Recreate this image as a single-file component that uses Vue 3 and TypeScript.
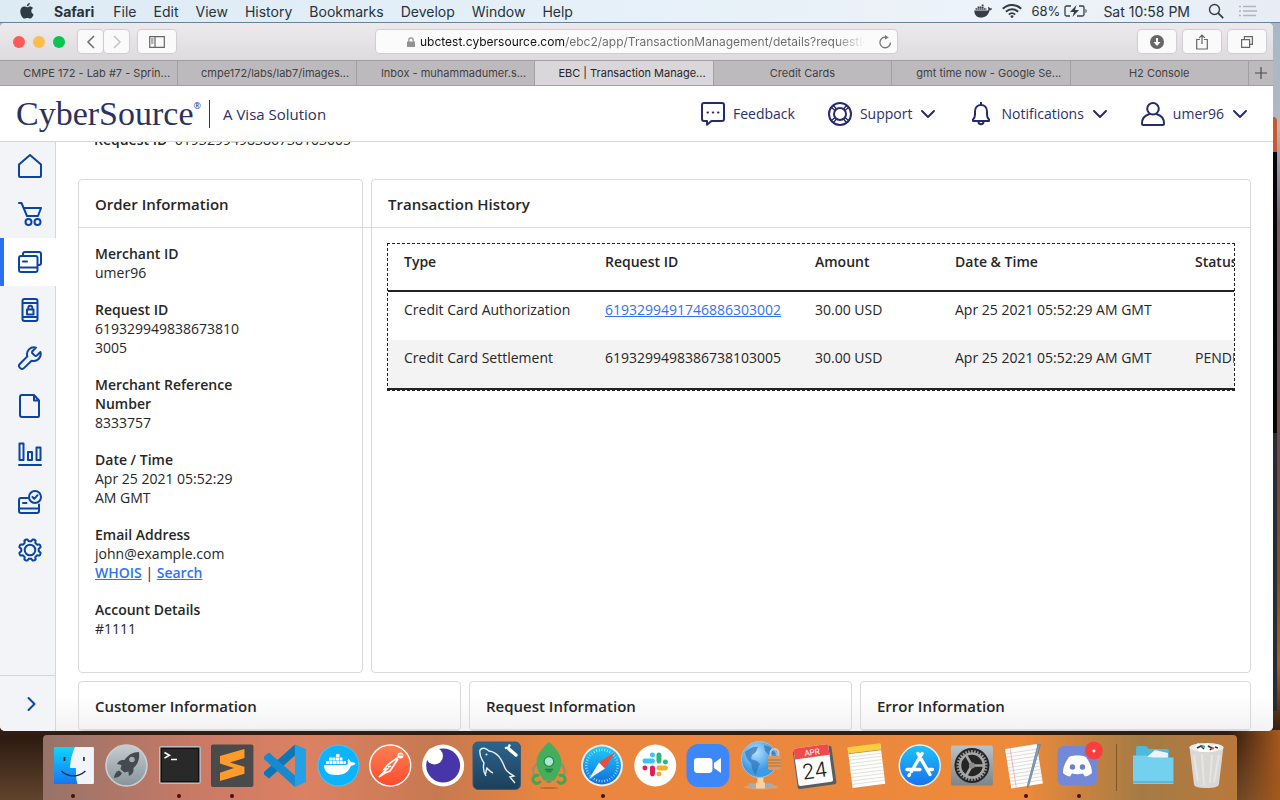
<script setup lang="ts">
interface Field {
  label: string
  lines: string[]
  links?: string[]
}
interface Transaction {
  type: string
  id: string
  linked: boolean
  amount: string
  date: string
  status: string
}
interface NavItem {
  name: string
  d: string
  active?: boolean
}

const menus: string[] = ['File', 'Edit', 'View', 'History', 'Bookmarks', 'Develop', 'Window', 'Help']

const tabs = [
  { title: 'CMPE 172 - Lab #7 - Sprin...', long: true },
  { title: 'cmpe172/labs/lab7/images...', long: true },
  { title: 'Inbox - muhammadumer.s...', long: true },
  { title: 'EBC | Transaction Manage...', long: true, active: true },
  { title: 'Credit Cards' },
  { title: 'gmt time now - Google Se...', long: true },
  { title: 'H2 Console' },
]

function gearPath(): string {
  const pts: string[] = []
  for (let i = 0; i < 128; i++) {
    const a = (i / 128) * Math.PI * 2
    const r = 9.9 - 1.2 * Math.tanh(3 * Math.cos(8 * a))
    pts.push(`${(12 + r * Math.sin(a)).toFixed(2)} ${(12 - r * Math.cos(a)).toFixed(2)}`)
  }
  return `M${pts.join('L')}Z`
}

const nav: NavItem[] = [
  { name: 'Home', d: 'M1 10.500 12 1l11 9.500V22a1 1 0 0 1-1 1H2a1 1 0 0 1-1-1z' },
  { name: 'Virtual terminal', d: 'M1 1h2.500L9 14h11l3-8H5.500M13.500 20a3 3 0 1 1-6 0a3 3 0 1 1 6 0zM22.500 20a3 3 0 1 1-6 0a3 3 0 1 1 6 0z' },
  { name: 'Transaction management', active: true, d: 'M3 6h14.500a2 2 0 0 1 2 2v12a2 2 0 0 1-2 2H3a2 2 0 0 1-2-2V8a2 2 0 0 1 2-2zM1 17.500h18.500M5 11.500h4M5 5.500V4a2 2 0 0 1 2-2h14a2 2 0 0 1 2 2v9a2 2 0 0 1-2 2h-1' },
  { name: 'Token management', d: 'M6.500 1h11a2 2 0 0 1 2 2v18a2 2 0 0 1-2 2h-11a2 2 0 0 1-2-2V3a2 2 0 0 1 2-2zM4.500 5h15M4.500 19h15M9 11.500h6.500v5H9zM10.300 11V9.800a2 2 0 0 1 4 0V11' },
  { name: 'Tools', d: 'M18 1.600A7 7 0 0 0 9.300 10.400L2 17.700a2.900 2.900 0 0 0 4.200 4.200l7.400-7.200A7 7 0 0 0 22.400 6l-3.600 3.600a1.400 1.400 0 0 1-2 0l-2.400-2.400a1.400 1.400 0 0 1 0-2z' },
  { name: 'Documents', d: 'M4 1h12l5 5.500V22a1 1 0 0 1-1 1H4a2 2 0 0 1-2-2V3a2 2 0 0 1 2-2zM16 1v5.500h5' },
  { name: 'Reports', d: 'M1 23h22M1.500 1.500h4V18h-4zM10 10h4v8h-4zM18.500 5.500h4V18h-4z' },
  { name: 'Payment configuration', d: 'M9.500 8H3a2 2 0 0 0-2 2v11a2 2 0 0 0 2 2h16a2 2 0 0 0 2-2v-6.500M1 18.500h20M5 13h3.500M23 7a6 6 0 1 1-12 0a6 6 0 1 1 12 0zM14.500 7l1.800 1.800 3.200-3.600' },
  { name: 'Settings', d: gearPath() + 'M17.300 12a5.300 5.300 0 1 1-10.600 0a5.300 5.300 0 1 1 10.600 0z' },
]

const fields: Field[] = [
  { label: 'Merchant ID', lines: ['umer96'] },
  { label: 'Request ID', lines: ['6193299498386738103005'] },
  { label: 'Merchant Reference Number', lines: ['8333757'] },
  { label: 'Date / Time', lines: ['Apr 25 2021 05:52:29 AM GMT'] },
  { label: 'Email Address', lines: ['john@example.com'], links: ['WHOIS', 'Search'] },
  { label: 'Account Details', lines: ['#1111'] },
]

const transactions: Transaction[] = [
  { type: 'Credit Card Authorization', id: '6193299491746886303002', linked: true, amount: '30.00 USD', date: 'Apr 25 2021 05:52:29 AM GMT', status: '' },
  { type: 'Credit Card Settlement', id: '6193299498386738103005', linked: false, amount: '30.00 USD', date: 'Apr 25 2021 05:52:29 AM GMT', status: 'PENDING' },
]

const lowerCards: string[] = ['Customer Information', 'Request Information', 'Error Information']

const ticks: number[] = Array.from({ length: 36 }, (_, i) => i * 10)
const teeth: number[] = Array.from({ length: 30 }, (_, i) => i * 12)
</script>

<template>
  <div class="desktop">
    <header class="menubar">
      <svg class="apple" viewBox="0 0 14 16" width="14" height="16"><path d="M9.800 0c.1 1.500-1.300 3.200-2.900 3.200C6.700 1.700 8.200.2 9.800 0zM7.200 4.300c.7 0 1.500-.8 2.900-.8 1.200 0 2.300.6 3 1.600-2.700 1.600-2.200 5.200.5 6.300-.6 1.700-2 4.200-3.500 4.200-1 0-1.500-.6-2.800-.6s-1.800.6-2.700.6C2.600 15.600.3 11.600.3 8.400c0-3 1.900-4.800 3.900-4.800 1.300 0 2.300.7 3 .7z" fill="#2f3b45" /></svg>
      <nav class="menus">
        <strong>Safari</strong>
        <span v-for="m in menus" :key="m">{{ m }}</span>
      </nav>
      <div class="status">
        <svg viewBox="0 0 18 14" width="18" height="14"><path d="M.3 6.500h13c1 0 1.300-.7 1-1.800l-.3-1 .8-1 1.400 1.700c.7-.1 1.500 0 1.900.4-.4 1.100-1.300 1.400-2.500 1.500C14.500 11 11.500 13.600 7 13.600 2.500 13.600.4 10.700.3 6.500z" fill="#353d45" /><path d="M1.500 5h10.800M3.600 3.200h6.500M7.800 1.200h2" stroke="#353d45" stroke-width="1.600" stroke-dasharray="1.700 .4" fill="none" /></svg>
        <svg viewBox="0 0 20 14" width="20" height="14"><g fill="none" stroke="#353d45" stroke-width="2"><path d="M.8 4.800a13 13 0 0 1 18.400 0" /><path d="M3.900 7.800a8.700 8.700 0 0 1 12.200 0" /><path d="M6.900 10.600a4.400 4.400 0 0 1 6.200 0" /></g><circle cx="10" cy="12.600" r="1.400" fill="#353d45" /></svg>
        <span class="battery-text">68%</span>
        <svg class="battery" viewBox="0 0 24 12" width="24" height="12"><path d="M7 1H2.500A1.500 1.500 0 0 0 1 2.500v7A1.500 1.500 0 0 0 2.500 11H6M15 1h3.500A1.500 1.500 0 0 1 20 2.500v7a1.500 1.500 0 0 1-1.500 1.500H13" fill="none" stroke="#353d45" stroke-width="1.300" /><path d="M12.500 0 6 7h4l-1.500 5L15 5h-4zM21.500 4c1.600.6 1.600 3.400 0 4z" fill="#353d45" /></svg>
        <span class="clock">Sat 10:58 PM</span>
        <svg class="search" viewBox="0 0 16 16" width="16" height="16"><circle cx="6.500" cy="6.500" r="5" fill="none" stroke="#353d45" stroke-width="1.400" /><path d="m10.200 10.200 5 5" stroke="#353d45" stroke-width="1.800" /></svg>
        <svg viewBox="0 0 18 12" width="18" height="12"><path d="M0 1.500h2M4 1.500h13M0 6h2M4 6h14M0 10.500h2M4 10.500h13" stroke="#aeb6bd" stroke-width="1.600" /></svg>
      </div>
    </header>

    <div class="stage">
      <main class="window">
        <div class="toolbar">
          <div class="lights"><i class="red"></i><i class="amber"></i><i class="green"></i></div>
          <div class="pair">
            <button class="tool narrow" aria-label="Back"><svg viewBox="0 0 10 14" width="10" height="14"><path d="M8 1 2 7l6 6" fill="none" stroke="#6b6b6b" stroke-width="1.500" /></svg></button>
            <button class="tool narrow" aria-label="Forward"><svg viewBox="0 0 10 14" width="10" height="14"><path d="m2 1 6 6-6 6" fill="none" stroke="#c3c3c3" stroke-width="1.500" /></svg></button>
          </div>
          <button class="tool sidebar-btn" aria-label="Sidebar"><svg viewBox="0 0 16 12" width="16" height="12"><path d="M.7.700h14.600v10.600H.7zM6 .7v10.600M2 3h2.500M2 5h2.500M2 7h2.500" fill="none" stroke="#666" stroke-width="1.200" /></svg></button>
          <div class="address">
            <svg viewBox="0 0 8 10" width="8" height="10"><path d="M0 4.500h8V10H0z" fill="#929292" /><path d="M1.800 5V3a2.200 2.200 0 0 1 4.400 0v2" fill="none" stroke="#929292" stroke-width="1.200" /></svg>
            <input aria-label="Address" type="text" value="ubctest.cybersource.com/ebc2/app/TransactionManagement/details?requestId" />
            <button class="reload" aria-label="Reload"><svg viewBox="0 0 14 14" width="14" height="14"><path d="M12.500 7.500a5.300 5.300 0 1 1-4.500-5.300" fill="none" stroke="#777" stroke-width="1.300" /><path d="M7 0v4.600l3.800-2.200z" fill="#777" /></svg></button>
          </div>
          <div class="right-tools">
            <button class="tool" aria-label="Downloads"><svg viewBox="0 0 14 14" width="14" height="14"><circle cx="7" cy="7" r="7" fill="#666" /><path d="M6 3h2v4h2.500L7 11 3.500 7H6z" fill="#fff" /></svg></button>
            <button class="tool" aria-label="Share"><svg viewBox="0 0 12 16" width="12" height="16"><path d="M4 5.500H.700V15h10.600V5.500H8M6 10V1M3.200 3.800 6 1l2.800 2.800" fill="none" stroke="#666" stroke-width="1.200" /></svg></button>
            <button class="tool" aria-label="Show all tabs"><svg viewBox="0 0 12 12" width="12" height="12"><path d="M.6 3.600h8v7.800h-8zM3.400 3.500V.6h8v7.800H8.700" fill="none" stroke="#666" stroke-width="1.200" /></svg></button>
          </div>
        </div>

        <div class="tabs">
          <button v-for="t in tabs" :key="t.title" class="tab" :class="{ active: t.active, long: t.long }">{{ t.title }}</button>
          <button class="new-tab" aria-label="New tab"><svg viewBox="0 0 12 12" width="12" height="12"><path d="M6 0v12M0 6h12" stroke="#4c4a4c" stroke-width="1.200" /></svg></button>
        </div>

        <header class="app-header">
          <a class="brand" href="#">
            <span class="wordmark">CyberSource</span><span class="reg">®</span>
            <span class="tagline">A Visa Solution</span>
          </a>
          <div class="actions">
            <button class="action">
              <svg viewBox="0 0 24 24" width="24" height="24"><path d="M3 1h18a2 2 0 0 1 2 2v14a2 2 0 0 1-2 2H10.500L6 22.800V19H3a2 2 0 0 1-2-2V3a2 2 0 0 1 2-2z" /><path d="M6.500 10.500h.5M11.800 10.500h.5M17 10.500h.5" /></svg>
              Feedback
            </button>
            <button class="action">
              <svg viewBox="0 0 24 24" width="24" height="24"><circle cx="12" cy="12" r="11" /><circle cx="12" cy="12" r="6" /><path d="m5.500 3.500 3 3.500M3.500 5.500l3.500 3M18.500 3.500l-3 3.500M20.500 5.500l-3.500 3M5.500 20.500l3-3.500M3.500 18.500l3.500-3M18.500 20.500l-3-3.500M20.500 18.500l-3.500-3" stroke-width="1.400" /></svg>
              Support
              <svg class="chev" viewBox="0 0 16 10" width="16" height="10"><path d="m2 2 6 6 6-6" /></svg>
            </button>
            <button class="action">
              <svg viewBox="0 0 24 24" width="24" height="24"><path d="M12 0v3M4 19v-1.500c1.600-1.400 2-3 2-5V9.500C6 5.500 8.500 3 12 3s6 2.500 6 6.500v3c0 2 .4 3.600 2 5V19zM9.500 19.500a2.500 2.800 0 0 0 5 0" /></svg>
              <span class="wide">Notifications</span>
              <svg class="chev" viewBox="0 0 16 10" width="16" height="10"><path d="m2 2 6 6 6-6" /></svg>
            </button>
            <button class="action">
              <svg viewBox="0 0 24 24" width="24" height="24"><circle cx="12" cy="6.800" r="5.800" /><path d="M8 12.300C3.800 13.500 1 17 1 21.500 1 22.600 1.500 23 2.500 23h19c1 0 1.500-.4 1.500-1.500 0-4.500-2.800-8-7-9.200" /></svg>
              umer96
              <svg class="chev" viewBox="0 0 16 10" width="16" height="10"><path d="m2 2 6 6 6-6" /></svg>
            </button>
          </div>
        </header>

        <div class="app-body">
          <nav class="rail">
            <a v-for="n in nav" :key="n.name" href="#" class="rail-item" :class="{ active: n.active }" :aria-label="n.name">
              <svg viewBox="0 0 24 24" width="24" height="24"><path :d="n.d" /></svg>
            </a>
            <button class="expand" aria-label="Expand"><svg viewBox="0 0 10 16" width="10" height="16"><path d="m1.500 2 6 6-6 6" /></svg></button>
          </nav>

          <section class="content">
            <p class="summary"><b>Request ID</b> 6193299498386738103005</p>

            <div class="row top">
              <article class="card">
                <h2 class="bridge">Order Information</h2>
                <dl class="fields">
                  <div v-for="f in fields" :key="f.label">
                    <dt>{{ f.label }}</dt>
                    <dd v-for="l in f.lines" :key="l">{{ l }}</dd>
                    <dd v-if="f.links"><a href="#">{{ f.links[0] }}</a> | <a href="#">{{ f.links[1] }}</a></dd>
                  </div>
                </dl>
              </article>
              <article class="card">
                <h2>Transaction History</h2>
                <div class="table-box">
                  <table>
                    <colgroup><col class="c-type" /><col class="c-id" /><col class="c-amount" /><col class="c-date" /><col class="c-status" /></colgroup>
                    <thead>
                      <tr><th>Type</th><th>Request ID</th><th>Amount</th><th>Date &amp; Time</th><th>Status</th></tr>
                    </thead>
                    <tbody>
                      <tr v-for="t in transactions" :key="t.id">
                        <td>{{ t.type }}</td>
                        <td><a v-if="t.linked" href="#">{{ t.id }}</a><template v-else>{{ t.id }}</template></td>
                        <td>{{ t.amount }}</td>
                        <td>{{ t.date }}</td>
                        <td>{{ t.status }}</td>
                      </tr>
                    </tbody>
                  </table>
                </div>
              </article>
            </div>

            <div class="row lower">
              <article v-for="c in lowerCards" :key="c" class="card"><h2>{{ c }}</h2></article>
            </div>
          </section>
        </div>
      </main>
      <div class="behind"><i class="b-orange"></i><i class="b-black"></i><i class="b-slate"></i></div>
    </div>

    <footer class="dock">
      <button class="app running" aria-label="Finder"><svg viewBox="0 0 53 65">
        <defs><linearGradient id="fi" x1="0" y1="0" x2="0" y2="1"><stop offset="0" stop-color="#0fd5fb" /><stop offset="1" stop-color="#1476f5" /></linearGradient></defs>
        <rect x="7" y="12" width="40" height="37" rx="1" fill="#f1f4f9" /><path d="M7 12h21c-3 7-4.500 13-5 21h6c0 6 0 11 1.500 16H7z" fill="url(#fi)" />
        <path d="M17.500 22v4M37 22v4" stroke="#12283c" stroke-width="1.600" /><path d="M14.500 36c7 6.500 17 6.500 24 0" fill="none" stroke="#12283c" stroke-width="1.300" /></svg></button>
      <button class="app" aria-label="Launchpad"><svg viewBox="0 0 53 65">
        <defs><linearGradient id="lp" x1="0" y1="0" x2="0" y2="1"><stop offset="0" stop-color="#c5cdd0" /><stop offset="1" stop-color="#86949a" /></linearGradient></defs>
        <circle cx="26.500" cy="30.500" r="20.500" fill="url(#lp)" stroke="#c9ced1" stroke-width="1.600" />
        <path d="M39 17c-6 0-11 3-14.500 8-3.500-.500-6 .5-7.500 4l4.500 1-1 4 4 3.500 4-1 .5 4.500c4-1.500 5-4.500 4.500-8C38 29 40 24 39 17z" fill="#444b50" /><circle cx="32" cy="24.500" r="2.800" fill="#9facb1" /><path d="M19 35.500c-3 1-4.500 4-5 7.500 4-.5 7-2 8-5z" fill="#444b50" /></svg></button>
      <button class="app running" aria-label="Terminal"><svg viewBox="0 0 53 65">
        <rect x="6" y="11" width="42" height="38" rx="2" fill="#bcbcbc" /><rect x="7.500" y="12.500" width="39" height="35" fill="#111" /><rect x="9" y="14" width="36" height="32" fill="#292929" />
        <path d="m11.500 17.500 5 2.800-5 2.800M18 24.500h6" fill="none" stroke="#fff" stroke-width="1.600" /></svg></button>
      <button class="app running" aria-label="Sublime Text"><svg viewBox="0 0 53 65">
        <rect x="5" y="9.500" width="42.500" height="42.500" rx="2" fill="#4a4a4a" />
        <path d="M14 21l24.500-7v9L24 27.500l14.500 4.200v7L14 46v-8.300L28 33l-14-4.500z" fill="#ff9a2b" /></svg></button>
      <button class="app" aria-label="Visual Studio Code"><svg viewBox="0 0 53 65">
        <path d="M36 9.500v11L10 43.500 5 39.500v-2.500z" fill="#0b76b8" /><path d="m5 21.500 5-4L36 40.500v11.500L5 24z" fill="#1789cf" /><path d="M36 9.500V52l11-5V14z" fill="#20a1e8" /></svg></button>
      <button class="app" aria-label="Docker"><svg viewBox="0 0 53 65">
        <circle cx="26.500" cy="30.500" r="20.500" fill="#0db3fb" stroke="#45c8ff" />
        <path d="M12 30h22c2-.500 2.500-2 1.500-4.500l1-1.500c1.500 1 2.300 2.200 2.500 3.500 1.800-.4 3.300 0 4.500.8-.8 1.800-2.300 2.400-4.500 2.400C37 37.500 31 40 24 40c-7.500 0-12-3-12-10z" fill="#fff" />
        <path d="M14 27.500h20M17 24h14M24 20.500h4" stroke="#fff" stroke-width="3" stroke-dasharray="3 .5" fill="none" /></svg></button>
      <button class="app" aria-label="Postman"><svg viewBox="0 0 53 65">
        <defs><linearGradient id="pm" x1="0" y1="0" x2="0" y2="1"><stop offset="0" stop-color="#fb7f54" /><stop offset="1" stop-color="#ff4c2b" /></linearGradient></defs>
        <circle cx="26.300" cy="30.500" r="20.500" fill="url(#pm)" stroke="#fff" stroke-width="1.400" />
        <circle cx="36.500" cy="20.500" r="3" fill="#fff" /><path d="m34 22.500-10 7-4 5 3-.5-8 8M34 24l-8 12-5 2-6 4M24 32l3-1" fill="none" stroke="#fff" stroke-width="1.700" /><path d="m35 20 4 0" stroke="#ff6a45" /></svg></button>
      <button class="app" aria-label="Insomnia"><svg viewBox="0 0 53 65">
        <circle cx="26.200" cy="30.500" r="21" fill="#fff" /><circle cx="26.200" cy="30.500" r="17" fill="#4735a9" /><circle cx="17.500" cy="21" r="8.500" fill="#fff" /></svg></button>
      <button class="app" aria-label="MySQL Workbench"><svg viewBox="0 0 53 65">
        <defs><linearGradient id="my" x1="0" y1="0" x2="0" y2="1"><stop offset="0" stop-color="#2b6590" /><stop offset="1" stop-color="#1d3f59" /></linearGradient></defs>
        <rect x="3" y="7" width="47.500" height="47.500" rx="5" fill="url(#my)" stroke="#3a5870" />
        <path d="M16 41c-3-5-3-9-2-13-2-4-5-6-4-13 2-3 6-2 9 1 9 1 13 9 16 17 1.500 4 4 5 9 8l-4 1 5 6M15 40c1-1 1-4 2-7 2 2 3 4 6 5" fill="none" stroke="#e9f0f4" stroke-width="1.400" /><circle cx="16.500" cy="19.500" r="1" fill="#e9f0f4" />
        <path d="m39 14 7 6" stroke="#fff" stroke-width="3.400" stroke-linecap="round" /><path d="M40 9.500l-1.500 3-3.500.5" fill="none" stroke="#fff" stroke-width="2.300" /></svg></button>
      <button class="app" aria-label="Rocket"><svg viewBox="0 0 53 65">
        <ellipse cx="26" cy="53" rx="9" ry="1" fill="#a85d32" opacity=".7" /><path d="M14 29c-4 3-5 8-2 13M38 29c4 3 5 8 2 13" fill="none" stroke="#9c8d6d" stroke-width="2.600" />
        <path d="M26 7c8 7 12.500 14 12.500 20 0 7-4 14-7.500 18.500H21C17.500 41 13.500 34 13.500 27 13.500 21 18 14 26 7z" fill="#43ae5c" /><circle cx="26" cy="26.500" r="4.800" fill="#aee6d5" stroke="#258b44" stroke-width="1.200" />
        <path d="M22 34.500h8M23.500 36.500h5" stroke="#227b3b" stroke-width="1.300" /><path d="M22.500 45.500h7l-2 2.500h-3z" fill="#788b77" /><path d="M16 41a4 4 0 1 0 1.500 5M36 41a4 4 0 1 1-1.500 5" fill="none" stroke="#3ba952" stroke-width="3" /></svg></button>
      <button class="app running" aria-label="Safari"><svg viewBox="0 0 53 65">
        <defs><linearGradient id="sf" x1="0" y1="0" x2="0" y2="1"><stop offset="0" stop-color="#1dcdfa" /><stop offset="1" stop-color="#126bde" /></linearGradient></defs>
        <circle cx="26" cy="30.500" r="21" fill="#e8eef0" /><circle cx="26" cy="30.500" r="19" fill="url(#sf)" />
        <g stroke="#cdeefd" stroke-width=".7"><path v-for="t in ticks" :key="t" d="M26 13.500v2.500" :transform="`rotate(${t} 26 30.500)`" /></g>
        <path d="M39 17 23 27.500l6 6z" fill="#f0483e" /><path d="M13 44l10-16.500 6 6z" fill="#f4f4f4" /></svg></button>
      <button class="app" aria-label="Slack"><svg viewBox="0 0 53 65">
        <circle cx="26.300" cy="30.500" r="21" fill="#fff" /><g stroke-width="5" stroke-linecap="round"><path d="M23.500 20v0M23.500 26h-7.500" stroke="#36c5f0" /><path d="M30 20v6M36.500 27v0" stroke="#2eb67d" /><path d="M36.500 33H30M30 39v0" stroke="#ecb22e" /><path d="M23.500 33v6M16 33v0" stroke="#e01e5a" /></g></svg></button>
      <button class="app" aria-label="Zoom"><svg viewBox="0 0 53 65">
        <rect x="4.500" y="9" width="43" height="43" rx="12" fill="#3e87fb" /><rect x="12" y="23" width="18.500" height="15" rx="3.500" fill="#fff" /><path d="m32 28 7-5v15l-7-5z" fill="#fff" /></svg></button>
      <button class="app" aria-label="Network"><svg viewBox="0 0 53 65">
        <defs><radialGradient id="gl" cx=".4" cy=".3"><stop offset="0" stop-color="#b4e2ff" /><stop offset="1" stop-color="#3d9be6" /></radialGradient></defs>
        <ellipse cx="26" cy="52" rx="17" ry="2.500" fill="#d9a070" /><path d="M14 50.500h24" stroke="#a5adb1" stroke-width="4" /><path d="M21 50.500h9M25.500 42v7" stroke="#f6d2a6" stroke-width="6" />
        <circle cx="24.500" cy="24.500" r="18" fill="url(#gl)" stroke="#8fc6f0" /><path d="M10 17c5-4 9-6 13-5l-2 5-4 3-1 4 6 2 3 3-2 4-2 7c-4-4-4-8-5-12-3-3-5-5-6-11zM29 10l6 2 5 7-6 1-4-4z" fill="#3173b7" opacity=".7" />
        <path d="M35.500 22v-4a4 4 0 0 1 8 0v4" fill="none" stroke="#c5c7c8" stroke-width="2" /><rect x="33" y="21" width="13" height="14" rx="1.500" fill="#d9995f" /><path d="M33 25h13M33 28h13M33 31h13" stroke="#b5703b" /></svg></button>
      <button class="app" aria-label="Calendar"><svg viewBox="0 0 53 65"><g transform="rotate(-8 26 31)">
        <rect x="7" y="13" width="39" height="39" rx="2" fill="#555e62" /><rect x="8" y="11" width="35" height="38" rx="2" fill="#fdfdfd" /><path d="M10 11h31a2 2 0 0 1 2 2v9H8v-9a2 2 0 0 1 2-2z" fill="#ef4b4a" />
        <text x="26" y="20" class="cal-month">APR</text><text x="26" y="43" class="cal-day">24</text></g></svg></button>
      <button class="app" aria-label="Notes"><svg viewBox="0 0 53 65"><g transform="rotate(-7 26 31)">
        <rect x="9" y="11" width="33" height="40" fill="#fdfdfb" /><rect x="9" y="10" width="33" height="6" fill="#fccd3d" /><path d="M9 16.500h33" stroke="#c19c39" /><path d="M9 20h33M9 23h33M9 26.500h33M9 30h33M9 33.500h33M9 37h33M9 40.500h33M9 44h33M9 47.500h33" stroke="#d7d7d1" stroke-width=".7" /></g></svg></button>
      <button class="app" aria-label="App Store"><svg viewBox="0 0 53 65">
        <defs><linearGradient id="as" x1="0" y1="0" x2="0" y2="1"><stop offset="0" stop-color="#1bc4fa" /><stop offset="1" stop-color="#1a70f0" /></linearGradient></defs>
        <circle cx="25.800" cy="30.500" r="20.500" fill="url(#as)" stroke="#e7eff6" stroke-width="1.500" /><g stroke="#fff" stroke-width="3.400" stroke-linecap="round"><path d="M28 18.500 17.500 36.500M24 18.500 36 39.500M13 34.500h13M33 34.500h5.500M15.500 39.500l-.5 1" /></g></svg></button>
      <button class="app" aria-label="System Preferences"><svg viewBox="0 0 53 65">
        <defs><linearGradient id="sp" x1="0" y1="0" x2="0" y2="1"><stop offset="0" stop-color="#b7c2c9" /><stop offset="1" stop-color="#7c858b" /></linearGradient></defs>
        <rect x="5" y="10.500" width="42" height="40" rx="2" fill="url(#sp)" /><circle cx="26" cy="30.500" r="17.500" fill="#252525" />
        <g stroke="#a0a0a0" stroke-width="1.500"><path v-for="t in teeth" :key="t" d="M26 15v3" :transform="`rotate(${t} 26 30.500)`" /></g>
        <circle cx="26" cy="30.500" r="12" fill="none" stroke="#a5a5a5" stroke-width="2.600" /><path d="M26 30.500h12M26 30.500l-6-10.500M26 30.500l-6 10.500" stroke="#a5a5a5" stroke-width="2.600" /><circle cx="26" cy="30.500" r="3" fill="#8b8b8b" /></svg></button>
      <button class="app running" aria-label="TextEdit"><svg viewBox="0 0 53 65"><g transform="rotate(-9 26 31)">
        <rect x="9" y="11" width="32" height="40" fill="#fdfdfd" /><path d="M9 16h32M9 19.500h32M9 23h32M9 26.500h32M9 30h32M9 33.500h32M9 37h32M9 40.500h32M9 44h32M9 47.500h32" stroke="#d0d0d0" stroke-width=".7" /><path d="M14 11v40" stroke="#f3a9a9" stroke-width=".8" /></g>
        <path d="M41.500 9.500 30 50l-1.500 3 .2-3.500L39 9.500z" fill="#83a5b9" stroke="#5d7b8e" stroke-width=".7" /></svg></button>
      <button class="app running" aria-label="Discord"><svg viewBox="0 0 53 65">
        <rect x="5.500" y="11" width="39.500" height="39.500" rx="6" fill="#7389d7" /><path d="M17 22c5-2 12-2 17 0 4 5 6 11 6 16-2 2-4 3-7 3.500l-2-3c-4 1-7 1-11 0l-2 3c-3-.5-5-1.500-7-3.500 0-5 2-11 6-16z" fill="#fff" />
        <circle cx="20.500" cy="32" r="2.700" fill="#6b7fc9" /><circle cx="30.500" cy="32" r="2.700" fill="#6b7fc9" /><circle cx="42" cy="15.500" r="9" fill="#fa3e3e" /><circle cx="42" cy="16" r="1.500" fill="#fff" /></svg></button>
      <span class="divider"></span>
      <button class="app" aria-label="Documents"><svg viewBox="0 0 53 65">
        <path d="M9 26V13a2 2 0 0 1 2-2h8l3 3h18a2 2 0 0 1 2 2v10z" fill="#4fb9dd" /><path d="M20 22l8-7 13 3v7z" fill="#eef4f5" /><path d="M6 20.500h13l3 2h24.500V48a1 1 0 0 1-1 1H7a1 1 0 0 1-1-1z" fill="#74d0ef" /><path d="M6 47h40.500" stroke="#4fb2d6" stroke-width="1.500" /></svg></button>
      <button class="app" aria-label="Trash"><svg viewBox="0 0 53 65">
        <path d="M9.500 12h34L39 49c-.5 3-4 4-12.500 4S14.500 52 14 49z" fill="#d9d8d5" /><ellipse cx="26.500" cy="12.500" rx="17" ry="4.500" fill="#eceae7" /><path d="M14 13l4-5 4 3 6-3 4 4 5-3 3 4-8 4H20z" fill="#fff" /><path d="m17 13 4-2 3 3M28 11l4 2-2 2M35 12l3 1" stroke="#333" stroke-width="1.600" fill="none" /><path d="m22 11 3 1" stroke="#32ae9f" stroke-width="2" /><path d="m31 14 3-1" stroke="#c65b38" stroke-width="2" />
        <path d="m14 20 4 26M22 19l2 31M32 20l-2 28M39 20l-5 27" stroke="#e6e5e2" stroke-width="2" /></svg></button>
    </footer>
  </div>
</template>

<style>
html,
body {
  margin: 0;
}
</style>

<style scoped>
* {
  box-sizing: border-box;
}
button,
input {
  font: inherit;
  color: inherit;
  border: 0;
  margin: 0;
  padding: 0;
  background: none;
}
svg {
  display: block;
  flex: none;
}
.desktop {
  height: 100vh;
  display: flex;
  flex-direction: column;
  overflow: hidden;
  font-family: Inter, Roboto, sans-serif;
  background:
    linear-gradient(90deg, transparent 96%, #a5591c) bottom / 100% 70px no-repeat,
    linear-gradient(180deg, #a7b8ca 0, #b0b8c2 16%, #75606b 28%, #6b4b4c 58%, #7b5226 72%, #9c6325 83%, #2c1a10 92%, #62442c 100%);
}
.menubar {
  flex: none;
  height: 23px;
  display: flex;
  align-items: center;
  padding: 0 23px 0 20px;
  border-bottom: 1px solid #66839b;
  background: linear-gradient(90deg, #ddebf5, #e5f0f8 45%, #edf3f9 80%, #e6edf4);
  font-size: 14px;
  color: #27323b;
  white-space: nowrap;
}
.menus {
  display: flex;
  gap: 17px;
  margin-left: 20px;
}
.menus strong {
  margin-right: 2px;
}
.status {
  display: flex;
  align-items: center;
  margin-left: auto;
  gap: 10px;
}
.battery-text {
  font-size: 13px;
}
.battery {
  margin-left: -6px;
}
.clock {
  margin: 0 8px 0 5px;
}
.search {
  margin-right: 5px;
}
.stage {
  flex: 1;
  min-height: 0;
  display: flex;
  padding-right: 3px;
}
.window {
  flex: 1;
  min-width: 0;
  display: flex;
  flex-direction: column;
  overflow: hidden;
  border-radius: 5px;
  background: #fff;
}
.behind {
  width: 4px;
  display: flex;
  flex-direction: column;
  padding: 94px 0 20px;
}
.b-orange {
  flex: 35;
  background: #d0552b;
  border-top-right-radius: 4px;
}
.b-black {
  flex: 281;
  background: #050505;
}
.b-slate {
  flex: 278;
  background: #2b2b33;
}
.toolbar {
  flex: none;
  height: 37px;
  display: flex;
  align-items: center;
  padding: 0 7px 0 13px;
  background: linear-gradient(#edeaed, #dedbde);
}
.lights {
  display: flex;
  gap: 8px;
  margin-right: 13px;
}
.lights i {
  width: 12px;
  height: 12px;
  border-radius: 50%;
}
.red {
  background: #fc5b57;
}
.amber {
  background: #fdbc4b;
}
.green {
  background: #07c650;
}
.pair {
  display: flex;
  gap: 1px;
  margin-right: 9px;
}
.tool {
  width: 38px;
  height: 23px;
  display: flex;
  align-items: center;
  justify-content: center;
  border-radius: 4px;
  background: #fbfafb;
  box-shadow: 0 0 1px 1px #d0cdd0;
}
.narrow {
  width: 25px;
}
.address {
  flex: 1;
  max-width: 521px;
  height: 23px;
  margin: 0 auto 0 200px;
  display: flex;
  align-items: center;
  padding: 0 5px 0 31px;
  border-radius: 4px;
  background: #fbfbfb;
  box-shadow: 0 0 1px 1px #d0cdd0;
}
.address input {
  flex: 1;
  min-width: 0;
  margin: 0 13px 0 5px;
  font-size: 12px;
  color: transparent;
  background: linear-gradient(90deg, #111 0 145px, #6a6a6a 145px calc(100% - 30px), transparent);
  background-clip: text;
  -webkit-background-clip: text;
}
.right-tools {
  display: flex;
  gap: 7px;
}
.tabs {
  flex: none;
  height: 26px;
  display: flex;
  border-top: 1px solid #a29fa2;
  border-bottom: 1px solid #a29fa2;
  background: #bdbabd;
}
.tab {
  flex: 1;
  min-width: 0;
  overflow: hidden;
  white-space: nowrap;
  font-size: 11px;
  color: #424042;
  text-align: center;
  border-right: 1px solid #a29fa2;
}
.tab.long {
  text-indent: 16px;
}
.tab.active {
  color: #262426;
  background: #dad7da;
}
.new-tab {
  width: 24px;
  display: flex;
  align-items: center;
  justify-content: center;
}
.app-header {
  flex: none;
  height: 56px;
  display: flex;
  align-items: center;
  justify-content: space-between;
  padding: 0 25px 0 16px;
  border-bottom: 1px solid #d6d6d6;
  font-family: "Open Sans", "Noto Sans", sans-serif;
  color: #2b3068;
}
.brand {
  display: flex;
  align-items: center;
  color: #2b3160;
  text-decoration: none;
}
.wordmark {
  font: 34px/36px "Liberation Serif", serif;
}
.reg {
  align-self: flex-start;
  font-size: 9px;
  line-height: 20px;
}
.tagline {
  margin-left: 8px;
  padding-left: 13px;
  border-left: 1px solid #2b3160;
  font-size: 15px;
  line-height: 28px;
}
.actions {
  display: flex;
  gap: 33px;
}
.action {
  display: flex;
  align-items: center;
  gap: 8px;
  font-size: 14px;
}
.action svg,
.rail svg {
  fill: none;
  stroke: #262c6a;
  stroke-width: 2;
  stroke-linecap: round;
  stroke-linejoin: round;
}
.app-body {
  flex: 1;
  min-height: 0;
  display: flex;
  font: 14px/19px "Open Sans", "Noto Sans", sans-serif;
  color: #262626;
}
.rail {
  flex: none;
  width: 56px;
  display: flex;
  flex-direction: column;
  border-right: 1px solid #d6d6d6;
  background: #f2f4f8;
}
.rail-item {
  height: 48px;
  display: flex;
  align-items: center;
  padding-left: 18px;
}
.rail-item.active {
  margin-right: -1px;
  padding-left: 14px;
  border-left: 4px solid #2b6ff5;
  background: #fff;
}
.rail svg {
  stroke: #0b45a3;
}
.expand {
  height: 56px;
  margin-top: auto;
  padding-left: 8px;
  display: flex;
  align-items: center;
  justify-content: center;
  border-top: 1px solid #d6d6d6;
}
.content {
  flex: 1;
  min-width: 0;
  overflow: hidden;
  padding: 0 22px;
  background: linear-gradient(transparent 94%, #f2f2f2);
}
.summary {
  margin: -12px 0 29px;
  padding-left: 16px;
  line-height: 20px;
}
.summary b {
  margin-right: 4px;
}
.summary b,
dt,
th,
h2 {
  font-weight: 600;
}
.row {
  display: grid;
  gap: 8px;
}
.top {
  grid-template-columns: 285fr 880fr;
}
.lower {
  grid-template-columns: 383fr 383fr 391fr;
  margin-top: 8px;
}
.card {
  min-width: 0;
  border: 1px solid #d9d9d9;
  border-radius: 4px;
}
h2 {
  margin: 0;
  padding: 0 16px;
  height: 48px;
  border-bottom: 1px solid #d9d9d9;
  font-size: 15px;
  line-height: 48px;
}
.bridge {
  margin-right: -9px;
}
.fields {
  width: 53%;
  margin: 0;
  padding: 16px 0 34px 16px;
  box-sizing: content-box;
  display: grid;
  gap: 18px;
  overflow-wrap: anywhere;
}
dd {
  margin: 0;
}
.card a {
  color: #2f73ee;
  text-decoration: underline;
}
.fields a {
  font-weight: 600;
}
.table-box {
  margin: 15px;
  border: 1px dashed #222;
  overflow: hidden;
}
table {
  width: 960px;
  table-layout: fixed;
  border-collapse: separate;
  border-spacing: 0;
  border-bottom: 2px solid #222;
}
.c-type {
  width: 201px;
}
.c-id {
  width: 210px;
}
.c-amount {
  width: 140px;
}
.c-date {
  width: 240px;
}
th,
td {
  height: 48px;
  padding: 8px 0 0 16px;
  text-align: left;
  vertical-align: top;
}
th {
  border-bottom: 2px solid #222;
}
tbody tr:nth-child(2) {
  background: #f3f3f3;
}
.dock {
  flex: none;
  height: 65px;
  margin: 4px 43px 0;
  padding: 0 4px;
  display: flex;
  border-radius: 4px 4px 0 0;
  background: linear-gradient(90deg, #96736a, #c97a65 13%, #dc8163 22%, #c67950 33%, #e9853f 42%, #ee8a3b 82%, #a47b45 92%, #b9783c);
}
.app {
  flex: 1;
  min-width: 0;
  position: relative;
}
.app svg {
  width: 100%;
  height: 65px;
}
.running::after {
  content: "";
  position: absolute;
  left: calc(50% - 2px);
  bottom: 2px;
  width: 4px;
  height: 4px;
  border-radius: 50%;
  background: #4b0d08;
}
.divider {
  width: 22px;
  padding: 9px 0;
  display: flex;
  justify-content: center;
}
.divider::before {
  content: "";
  width: 1px;
  background: #845425;
}
.cal-month {
  font: 8px Inter, sans-serif;
  fill: #fff;
  text-anchor: middle;
}
.cal-day {
  font: 300 21px Inter, sans-serif;
  fill: #222;
  text-anchor: middle;
}
</style>
